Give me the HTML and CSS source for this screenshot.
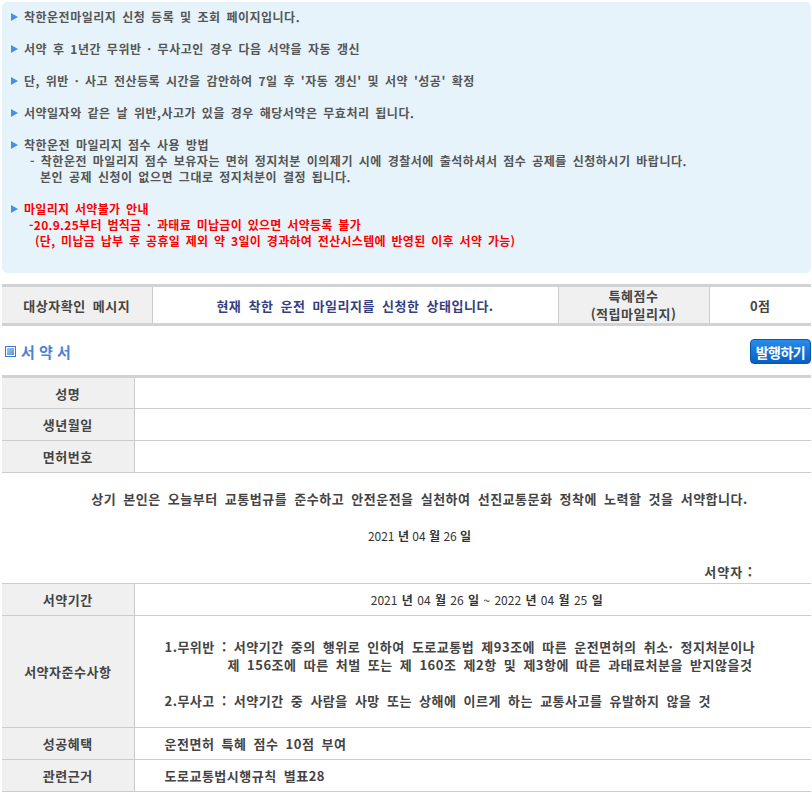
FILE: index.html
```html
<!DOCTYPE html>
<html lang="ko">

<head>
    <meta charset="UTF-8">
    <title>착한운전 마일리지</title>
    <link rel="stylesheet" href="styles.css">
</head>

<body>
    <div class="wrap">
        <ul class="notice">
            <li>착한운전마일리지 신청 등록 및 조회 페이지입니다.</li>
            <li>서약 후 1년간 무위반 · 무사고인 경우 다음 서약을 자동 갱신</li>
            <li>단, 위반 · 사고 전산등록 시간을 감안하여 7일 후 '자동 갱신' 및 서약 '성공' 확정</li>
            <li>서약일자와 같은 날 위반,사고가 있을 경우 해당서약은 무효처리 됩니다.</li>
            <li>착한운전 마일리지 점수 사용 방법
                <span class="sub">- 착한운전 마일리지 점수 보유자는 면허 정지처분 이의제기 시에 경찰서에 출석하셔서 점수 공제를 신청하시기 바랍니다.</span>
                <span class="sub2">본인 공제 신청이 없으면 그대로 정지처분이 결정 됩니다.</span>
            </li>
            <li class="red">마일리지 서약불가 안내
                <span class="sub red-sub">-20.9.25부터 범칙금 · 과태료 미납금이 있으면 서약등록 불가</span>
                <span class="sub2 red-sub2">(단, 미납금 납부 후 공휴일 제외 약 3일이 경과하여 전산시스템에 반영된 이후 서약 가능)</span>
            </li>
        </ul>

        <table class="status">
            <tr>
                <th class="w150">대상자확인 메시지</th>
                <td class="msg">현재 착한 운전 마일리지를 신청한 상태입니다.</td>
                <th class="w150 two">특혜점수<br>(적립마일리지)</th>
                <td class="score">0점</td>
            </tr>
        </table>

        <div class="title_bar">
            <h2 class="title"><span class="sq"></span>서 약 서</h2>
            <button class="issue_btn">발행하기</button>
        </div>

        <table class="form_table thick">
            <tr>
                <th>성명</th>
                <td></td>
            </tr>
            <tr>
                <th>생년월일</th>
                <td></td>
            </tr>
            <tr>
                <th>면허번호</th>
                <td></td>
            </tr>
        </table>

        <div class="pledge">
            <p class="pledge_text">상기 본인은 오늘부터 교통법규를 준수하고 안전운전을 실천하여 선진교통문화 정착에 노력할 것을 서약합니다.</p>
            <p class="date">2021 <b>년</b> 04 <b>월</b> 26 <b>일</b></p>
            <p class="signer">서약자 :</p>
        </div>

        <table class="form_table">
            <tr>
                <th>서약기간</th>
                <td class="period">2021 <b>년</b> 04 <b>월</b> 26 <b>일</b> ~ 2022 <b>년</b> 04 <b>월</b> 25 <b>일</b></td>
            </tr>
            <tr class="rules_row">
                <th>서약자준수사항</th>
                <td class="rules">
                    <p>1.무위반 : 서약기간 중의 행위로 인하여 도로교통법 제93조에 따른 운전면허의 취소· 정지처분이나</p>
                    <p class="indent">제 156조에 따른 처벌 또는 제 160조 제2항 및 제3항에 따른 과태료처분을 받지않을것</p>
                    <p class="gap">2.무사고 : 서약기간 중 사람을 사망 또는 상해에 이르게 하는 교통사고를 유발하지 않을 것</p>
                </td>
            </tr>
            <tr>
                <th>성공혜택</th>
                <td class="txt">운전면허 특혜 점수 10점 부여</td>
            </tr>
            <tr>
                <th>관련근거</th>
                <td class="txt">도로교통법시행규칙 별표28</td>
            </tr>
        </table>
    </div>
</body>

</html>
```

FILE: styles.css
```css
* {
    margin: 0;
    padding: 0;
    box-sizing: border-box;
}

body {
    font-family: "Noto Sans CJK KR", "Noto Sans", sans-serif;
    font-size: 13px;
    color: #444;
    background: white;
}

.wrap {
    padding: 2px 1px 0 2px;
}

/* top notice box */
.notice {
    background: rgb(230, 243, 250);
    border-radius: 5px;
    padding: 7px 0 8px;
}

.notice li {
    list-style: none;
    position: relative;
    padding-left: 22px;
    margin-bottom: 16px;
    font-size: 12px;
    line-height: 16px;
    font-weight: bold;
    color: #555;
    letter-spacing: 0.5px;
    word-spacing: 2px;
}

.notice li::before {
    content: "";
    position: absolute;
    left: 9px;
    top: 4px;
    border-left: 7px solid rgb(74, 143, 224);
    border-top: 4px solid transparent;
    border-bottom: 4px solid transparent;
}

.notice .sub,
.notice .sub2 {
    display: block;
}

.notice .sub {
    padding-left: 6px;
}

.notice .sub2 {
    padding-left: 16px;
}

.notice li.red {
    color: rgb(255, 0, 0);
    letter-spacing: 0.3px;
}

.notice .red-sub {
    padding-left: 5px;
}

.notice .red-sub2 {
    padding-left: 11px;
}

/* tables */
table {
    width: 100%;
    border-collapse: collapse;
}

th,
td {
    font-size: 13px;
    font-weight: bold;
    color: #444;
    letter-spacing: 0.5px;
    word-spacing: 3px;
}

th {
    background: rgb(240, 240, 240);
    text-align: center;
}

.status {
    margin-top: 11px;
    border-top: 3px solid rgb(210, 210, 210);
    border-bottom: 3px solid rgb(210, 210, 210);
}

.status th,
.status td {
    height: 36px;
    border-left: 1px solid rgb(204, 204, 204);
    text-align: center;
}

.status tr> :first-child {
    border-left: none;
}

.status .w150 {
    width: 150px;
}

.status .two {
    width: 151px;
    line-height: 18px;
    font-size: 13px;
}

.status .msg {
    color: rgb(52, 62, 128);
}

.status .score {
    width: 102px;
}

/* title */
.title_bar {
    display: flex;
    justify-content: space-between;
    align-items: center;
    padding: 13px 0 11px;
}

.title {
    display: flex;
    align-items: center;
    font-size: 15px;
    line-height: 18px;
    color: rgb(74, 132, 214);
    padding-left: 3px;
}

.title .sq {
    width: 11px;
    height: 11px;
    margin-right: 5px;
    border: 1px solid rgb(58, 120, 210);
    background: linear-gradient(135deg, rgb(170, 205, 245), rgb(80, 140, 220));
    box-shadow: inset 0 0 0 1px white;
}

.issue_btn {
    width: 61px;
    height: 25px;
    border: 1px solid rgb(10, 85, 175);
    border-radius: 4px;
    background: linear-gradient(rgb(40, 140, 235), rgb(8, 95, 195));
    color: white;
    font-family: inherit;
    font-size: 14px;
    font-weight: bold;
    letter-spacing: -0.5px;
    cursor: pointer;
}

.form_table {
    border-top: 1px solid rgb(204, 204, 204);
}

.form_table.thick {
    border-top: 3px solid rgb(210, 210, 210);
}

.form_table th,
.form_table td {
    height: 32px;
    border-bottom: 1px solid rgb(204, 204, 204);
}

.form_table th {
    width: 132px;
    border-right: 1px solid rgb(204, 204, 204);
}

/* pledge text */
.pledge {
    padding: 17px 0 2px 26px;
}

.pledge p {
    line-height: 18px;
    text-align: center;
}

.pledge_text {
    font-weight: bold;
    letter-spacing: 0.5px;
    word-spacing: 3px;
}

.date {
    margin-top: 19px;
    font-size: 12px;
    color: #333;
}

.signer {
    margin-top: 18px;
    text-align: right !important;
    padding-right: 58px;
    font-weight: bold;
    letter-spacing: 1px;
}

.form_table .period {
    padding-left: 28px;
    text-align: center;
    font-weight: normal;
    font-size: 12px;
    color: #333;
    letter-spacing: 0;
    word-spacing: 1px;
}

.form_table .rules_row th,
.form_table .rules_row td {
    height: 112px;
}

.rules {
    padding-left: 30px;
    padding-top: 4px;
}

.rules p {
    line-height: 18px;
}

.rules .indent {
    padding-left: 63px;
}

.rules .gap {
    margin-top: 18px;
}

.form_table .txt {
    padding-left: 30px;
}
```
